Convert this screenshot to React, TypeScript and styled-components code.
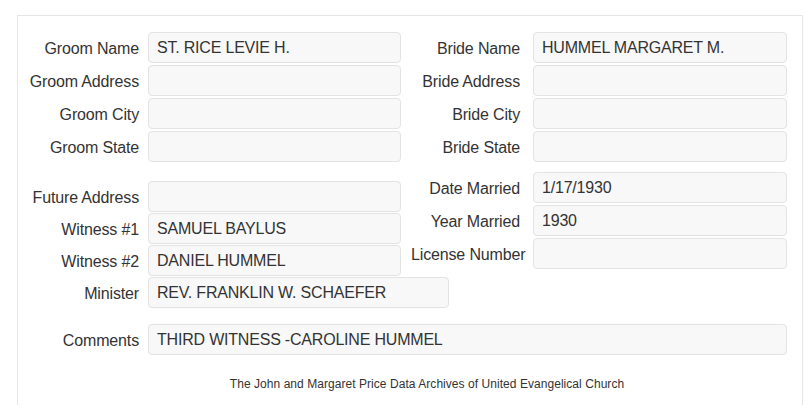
import React from "react";
import styled, { createGlobalStyle } from "styled-components";

const Global = createGlobalStyle`
  html, body { margin: 0; padding: 0; background: #fff; }
  body { font-family: "Liberation Sans", Arial, sans-serif; color: #333; }
`;

const Panel = styled.div`
  margin: 15px 0 0 17px;
  width: 786px;
  height: 420px;
  box-sizing: border-box;
  border: 1px solid #e6e6e6;
  border-bottom: none;
  padding-top: 16px;
`;

const Columns = styled.div`
  display: flex;
  align-items: flex-start;
`;

const Column = styled.div<{ $top?: number; $gap?: number; $w: number }>`
  width: ${(p) => p.$w}px;
  flex: none;
  display: flex;
  flex-direction: column;
  gap: ${(p) => p.$gap ?? 2}px;
  margin-top: ${(p) => p.$top ?? 0}px;
`;

const Row = styled.div`
  display: flex;
  align-items: center;
`;

const Label = styled.div<{ $w: number; $pad: number; $ml?: number }>`
  flex: none;
  width: ${(p) => p.$w}px;
  padding-right: ${(p) => p.$pad}px;
  margin-left: ${(p) => p.$ml ?? 0}px;
  text-align: right;
  font-size: 16px;
  letter-spacing: -0.15px;
  color: #333;
  white-space: nowrap;
  padding-top: 2px;
`;

const Field = styled.div<{ $w: number }>`
  flex: none;
  width: ${(p) => p.$w}px;
  height: 31px;
  box-sizing: border-box;
  background: #f8f8f8;
  border: 1px solid #e3e3e3;
  border-radius: 4px;
  padding: 0 8px;
  display: flex;
  align-items: center;
  font-size: 16px;
  letter-spacing: -0.2px;
  color: #333;
  white-space: nowrap;
`;

const CommentRow = styled(Row)`
  margin-top: 16px;
`;

const Footer = styled.div`
  margin-top: 21px;
  padding-left: 34px;
  text-align: center;
  font-size: 12px;
  line-height: 17px;
  letter-spacing: 0.05px;
  color: #333;
`;

type F = { label: string; value?: string; w?: number };

const LeftRow = ({ label, value = "", w = 253 }: F) => (
  <Row>
    <Label $w={121} $pad={9}>{label}</Label>
    <Field $w={w}>{value}</Field>
  </Row>
);

const RightRow = ({ label, value = "" }: F) => (
  <Row>
    <Label $w={109} $pad={13} $ml={10}>{label}</Label>
    <Field $w={254}>{value}</Field>
  </Row>
);

export default function App() {
  return (
    <>
      <Global />
      <Panel>
        <Columns>
          <Column $w={383} $gap={2}>
            <LeftRow label="Groom Name" value="ST. RICE LEVIE H." />
            <LeftRow label="Groom Address" />
            <LeftRow label="Groom City" />
            <LeftRow label="Groom State" />
          </Column>
          <Column $w={386} $gap={2}>
            <RightRow label="Bride Name" value="HUMMEL MARGARET M." />
            <RightRow label="Bride Address" />
            <RightRow label="Bride City" />
            <RightRow label="Bride State" />
          </Column>
        </Columns>
        <Columns>
          <Column $w={383} $top={19} $gap={1}>
            <LeftRow label="Future Address" />
            <LeftRow label="Witness #1" value="SAMUEL BAYLUS" />
            <LeftRow label="Witness #2" value="DANIEL HUMMEL" />
            <LeftRow label="Minister" value="REV. FRANKLIN W. SCHAEFER" w={301} />
          </Column>
          <Column $w={386} $top={10} $gap={2}>
            <RightRow label="Date Married" value="1/17/1930" />
            <RightRow label="Year Married" value="1930" />
            <RightRow label="License Number" />
          </Column>
        </Columns>
        <CommentRow>
          <Label $w={121} $pad={9}>Comments</Label>
          <Field $w={639}>THIRD WITNESS -CAROLINE HUMMEL</Field>
        </CommentRow>
        <Footer>The John and Margaret Price Data Archives of United Evangelical Church</Footer>
      </Panel>
    </>
  );
}
